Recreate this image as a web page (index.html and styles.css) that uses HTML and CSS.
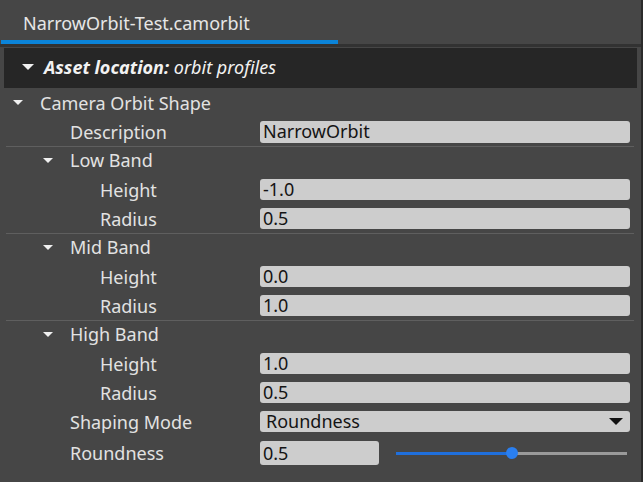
FILE: index.html
```html
<!DOCTYPE html>
<html>
<head>
<meta charset="utf-8">
<link rel="stylesheet" href="styles.css">
</head>
<body>
<div class="window">
  <div class="tabbar">
    <div class="tab">NarrowOrbit-Test.camorbit</div>
  </div>
  <div class="tabline"></div>
  <div class="header">
    <span class="caret caret-white"></span>
    <span class="hdr-bold">Asset location:</span>&nbsp;<span class="hdr-it">orbit profiles</span>
  </div>
  <div class="rows">
    <div class="row"><div class="label l0"><span class="caret"></span>Camera Orbit Shape</div></div>
    <div class="row"><div class="label l1t">Description</div><div class="value"><div class="field tall">NarrowOrbit</div></div></div>
    <div class="sep"></div>
    <div class="row band"><div class="label l1"><span class="caret"></span>Low Band</div></div>
    <div class="row"><div class="label l2t">Height</div><div class="value"><div class="field">-1.0</div></div></div>
    <div class="row"><div class="label l2t">Radius</div><div class="value"><div class="field">0.5</div></div></div>
    <div class="sep"></div>
    <div class="row band"><div class="label l1"><span class="caret"></span>Mid Band</div></div>
    <div class="row"><div class="label l2t">Height</div><div class="value"><div class="field">0.0</div></div></div>
    <div class="row"><div class="label l2t">Radius</div><div class="value"><div class="field">1.0</div></div></div>
    <div class="sep"></div>
    <div class="row band"><div class="label l1"><span class="caret"></span>High Band</div></div>
    <div class="row"><div class="label l2t">Height</div><div class="value"><div class="field">1.0</div></div></div>
    <div class="row"><div class="label l2t">Radius</div><div class="value"><div class="field">0.5</div></div></div>
    <div class="row"><div class="label l1t">Shaping Mode</div><div class="value"><div class="field select">Roundness<svg class="arrow" width="14" height="7" viewBox="0 0 14 7"><path d="M0 0H14L7 7Z" fill="#111"/></svg></div></div></div>
    <div class="row last"><div class="label l1t">Roundness</div><div class="value"><div class="field num">0.5</div><div class="slider"><div class="track"></div><div class="thumb"></div></div></div></div>
  </div>
</div>
</body>
</html>
```

FILE: styles.css
```css
html, body {
  margin: 0;
  padding: 0;
  background: #464646;
}
.window {
  width: 643px;
  height: 482px;
  box-sizing: border-box;
  border-right: 2px solid #2b2b2b;
  font-family: "Noto Sans", "Open Sans", sans-serif;
  font-size: 18px;
  color: #e2e2e2;
  overflow: hidden;
}
.tabbar {
  height: 44px;
  display: flex;
}
.tab {
  margin-left: 1px;
  width: 337px;
  box-sizing: border-box;
  padding-left: 22px;
  padding-top: 9px;
  height: 44px;
  line-height: 28px;
  border-bottom: 4px solid #0b84d9;
  color: #e6e6e6;
}
.tabline {
  height: 3px;
  background: #323232;
  margin-bottom: 1px;
}
.header {
  height: 40px;
  box-sizing: border-box;
  padding-bottom: 2px;
  margin: 0 4px 0 4px;
  background: #262626;
  display: flex;
  align-items: center;
  padding-left: 18px;
  color: #f2f2f2;
  font-style: italic;
}
.hdr-bold { font-weight: 700; margin-left: 10px; }
.hdr-it { font-weight: 400; }
.caret {
  display: inline-block;
  width: 0;
  height: 0;
  border-left: 5px solid transparent;
  border-right: 5px solid transparent;
  border-top: 5px solid #f0f0f0;
  margin-right: 17px;
  vertical-align: middle;
}
.caret-white { border-left-width: 6px; border-right-width: 6px; border-top-width: 6px; margin-right: 0; }
.rows { display: flex; flex-direction: column; }
.row {
  height: 29px;
  display: flex;
  align-items: center;
}
.row.band { height: 28px; }
.row.band .label { padding-bottom: 2px; }
.row.last { height: 34px; }
.label {
  width: 260px;
  box-sizing: border-box;
  white-space: nowrap;
  display: flex;
  align-items: center;
}
.l0 { padding-left: 13px; }
.l1 { padding-left: 43px; }
.l1t { padding-left: 70px; }
.l2t { padding-left: 100px; }
.value {
  flex: 1;
  padding-right: 11px;
  display: flex;
  align-items: center;
}
.field {
  flex: 1;
  height: 21px;
  line-height: 21px;
  background: #cdcdcd;
  border-radius: 3px;
  padding-left: 3px;
  color: #141414;
  display: flex;
  align-items: center;
}
.field.tall { height: 22px; }
.field.select { padding-left: 6px; justify-content: space-between; padding-right: 7px; }
.field.num { flex: 0 0 116px; height: 24px; }
.sep {
  height: 1px;
  background: #5f5f5f;
  margin: 0 7px 0 6px;
}
.slider {
  flex: 1;
  margin-left: 17px;
  margin-right: 3px;
  height: 12px;
  position: relative;
}
.track {
  position: absolute;
  left: 0; right: 0; top: 5px;
  height: 3px;
  background: linear-gradient(to right, #1f6fdc 0 50%, #9a9a9a 50% 100%);
}
.thumb {
  position: absolute;
  left: calc(50% - 6px);
  top: 0;
  width: 12px;
  height: 12px;
  border-radius: 50%;
  background: #2a7ff0;
}
```
